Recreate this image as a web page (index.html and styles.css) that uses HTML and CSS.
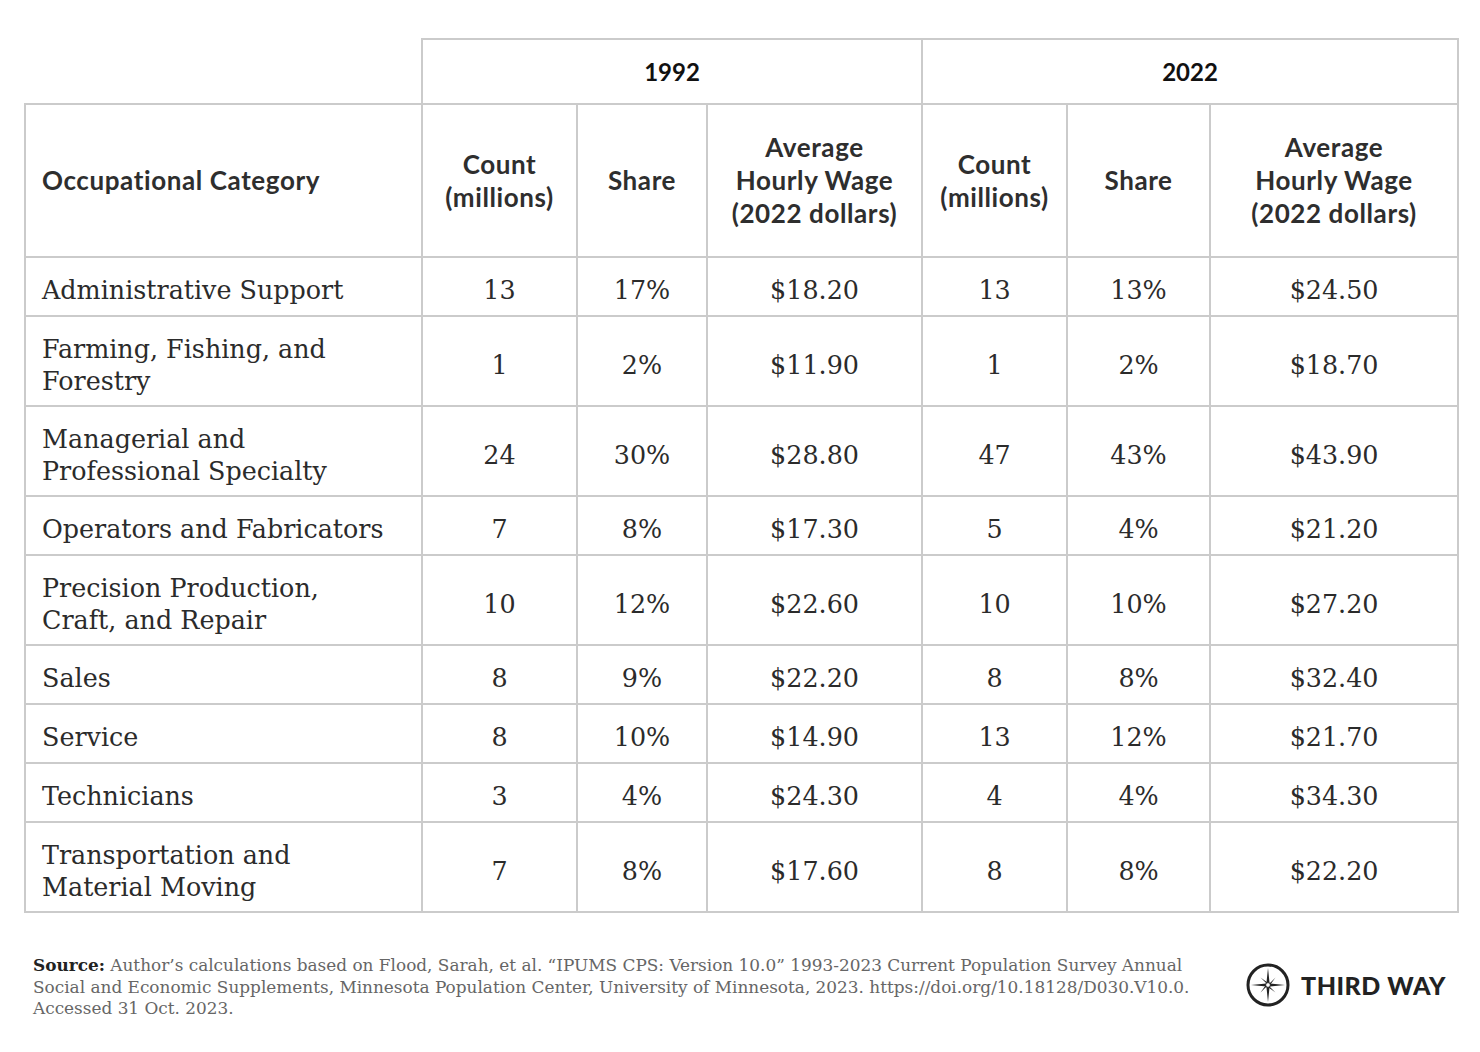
FILE: index.html
```html
<!DOCTYPE html>
<html lang="en">
<head>
<meta charset="utf-8">
<title>Occupational Categories 1992 vs 2022</title>
<link rel="stylesheet" href="styles.css">
</head>
<body>
<div class="page">
  <table class="data">
    <colgroup>
      <col class="c-cat"><col class="c-count"><col class="c-share"><col class="c-wage">
      <col class="c-count2"><col class="c-share2"><col class="c-wage2">
    </colgroup>
    <thead>
      <tr class="years">
        <th class="blank"></th>
        <th colspan="3">1992</th>
        <th colspan="3">2022</th>
      </tr>
      <tr class="heads">
        <th class="cat">Occupational Category</th>
        <th>Count<br>(millions)</th>
        <th>Share</th>
        <th>Average<br>Hourly Wage<br>(2022 dollars)</th>
        <th>Count<br>(millions)</th>
        <th>Share</th>
        <th>Average<br>Hourly Wage<br>(2022 dollars)</th>
      </tr>
    </thead>
    <tbody>
      <tr class="single"><td class="cat">Administrative Support</td><td>13</td><td>17%</td><td>$18.20</td><td>13</td><td>13%</td><td>$24.50</td></tr>
      <tr class="double"><td class="cat">Farming, Fishing, and<br>Forestry</td><td>1</td><td>2%</td><td>$11.90</td><td>1</td><td>2%</td><td>$18.70</td></tr>
      <tr class="double"><td class="cat">Managerial and<br>Professional Specialty</td><td>24</td><td>30%</td><td>$28.80</td><td>47</td><td>43%</td><td>$43.90</td></tr>
      <tr class="single"><td class="cat">Operators and Fabricators</td><td>7</td><td>8%</td><td>$17.30</td><td>5</td><td>4%</td><td>$21.20</td></tr>
      <tr class="double"><td class="cat">Precision Production,<br>Craft, and Repair</td><td>10</td><td>12%</td><td>$22.60</td><td>10</td><td>10%</td><td>$27.20</td></tr>
      <tr class="single"><td class="cat">Sales</td><td>8</td><td>9%</td><td>$22.20</td><td>8</td><td>8%</td><td>$32.40</td></tr>
      <tr class="single"><td class="cat">Service</td><td>8</td><td>10%</td><td>$14.90</td><td>13</td><td>12%</td><td>$21.70</td></tr>
      <tr class="single"><td class="cat">Technicians</td><td>3</td><td>4%</td><td>$24.30</td><td>4</td><td>4%</td><td>$34.30</td></tr>
      <tr class="double"><td class="cat">Transportation and<br>Material Moving</td><td>7</td><td>8%</td><td>$17.60</td><td>8</td><td>8%</td><td>$22.20</td></tr>
    </tbody>
  </table>

  <footer class="foot">
    <p class="source"><b>Source:</b> Author’s calculations based on Flood, Sarah, et al. “IPUMS CPS: Version 10.0” 1993-2023 Current Population Survey Annual<br>Social and Economic Supplements, Minnesota Population Center, University of Minnesota, 2023. https://doi.org/10.18128/D030.V10.0.<br>Accessed 31 Oct. 2023.</p>
    <div class="brand">
      <svg class="mark" width="46" height="46" viewBox="0 0 46 46" aria-hidden="true">
        <circle cx="23" cy="23" r="20" fill="none" stroke="#222" stroke-width="3"/>
        <polygon points="23,6 24.6,21.4 40,23 24.6,24.6 23,40 21.4,24.6 6,23 21.4,21.4" fill="#222"/>
        <polygon points="15.5,15.5 24.2,21.8 30.5,15.5 24.2,24.2 30.5,30.5 21.8,24.2 15.5,30.5 21.8,21.8" fill="#222"/>
        <circle cx="23" cy="23" r="2.4" fill="#fff" stroke="#222" stroke-width="1"/>
      </svg>
      <span class="word">THIRD WAY</span>
    </div>
  </footer>
</div>
</body>
</html>
```

FILE: styles.css
```css
html, body {
  margin: 0;
  padding: 0;
  background: #ffffff;
}

.page {
  width: 1480px;
  height: 1052px;
  padding: 38px 0 0 24px;
  box-sizing: border-box;
}

.data {
  border-collapse: collapse;
  width: 1433px;
  table-layout: fixed;
  color: #2b2b2b;
}

.c-cat { width: 397px; }
.c-count { width: 155px; }
.c-share { width: 130px; }
.c-wage { width: 215px; }
.c-count2 { width: 145px; }
.c-share2 { width: 143px; }
.c-wage2 { width: 248px; }

.data th,
.data td {
  border: 2px solid #cbcbcb;
  text-align: center;
  vertical-align: middle;
  padding: 0;
}

.data th {
  font-family: "Lato", "Noto Sans", sans-serif;
  font-weight: 700;
  font-size: 26px;
  letter-spacing: 0.6px;
  line-height: 33px;
  color: #2e2e2e;
}

.years th {
  height: 63px;
  color: #111;
  font-size: 24px;
  letter-spacing: 0;
}

.years th.blank {
  border-top: none;
  border-left: none;
}

.heads th {
  height: 151px;
}

.data th.cat,
.data td.cat {
  text-align: left;
  padding-left: 16px;
}

.data td {
  font-family: "DejaVu Serif", "Liberation Serif", serif;
  font-size: 25.4px;
  line-height: 32px;
  color: #2b2b2b;
  padding-top: 7px;
}

tr.single td { height: 50px; }
tr.double td { height: 81px; }

.foot {
  display: flex;
  align-items: center;
  justify-content: space-between;
  margin-top: 42px;
  padding-left: 9px;
  padding-right: 34px;
}

.source {
  margin: 0;
  font-family: "DejaVu Serif", "Liberation Serif", serif;
  font-size: 16.9px;
  line-height: 21.5px;
  color: #666;
}

.source b {
  color: #222;
  font-weight: 700;
}

.brand {
  display: flex;
  align-items: center;
  gap: 10px;
  margin-top: -4px;
}

.word {
  font-family: "Lato", "Noto Sans", sans-serif;
  font-weight: 900;
  font-size: 25px;
  letter-spacing: 0.5px;
  color: #222;
}
```
